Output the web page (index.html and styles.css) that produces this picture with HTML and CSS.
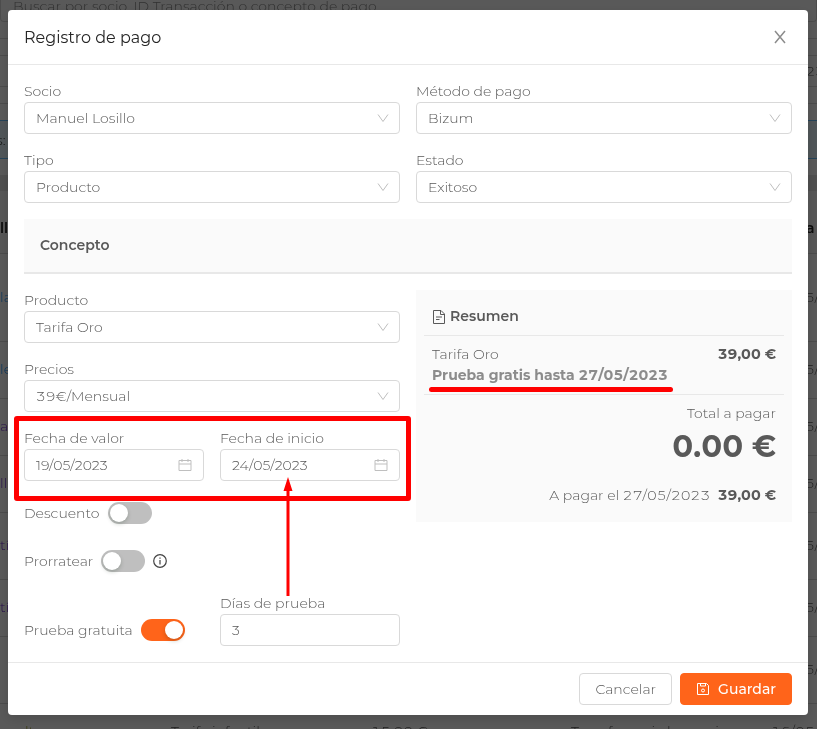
FILE: index.html
```html
<!DOCTYPE html>
<html lang="es">
<head>
  <meta charset="UTF-8">
  <meta name="viewport" content="width=device-width, initial-scale=1.0">
  <title>Registro de pago</title>
  <link rel="stylesheet" href="styles.css">
</head>
<body>
  <!-- Payments list behind the dialog -->
  <div class="page" inert>
    <input class="search" type="text" aria-label="Buscar" placeholder="Buscar por socio, ID Transacción o concepto de pago">
    <div class="strip"></div>
    <div class="strip"></div>
    <div class="strip strip-date"><span>23</span></div>
    <div class="strip"></div>
    <div class="notice">s:</div>
    <div class="band"></div>
    <table class="payments">
      <thead>
        <tr><th>ll</th><th></th><th></th><th></th><th>Fecha</th></tr>
      </thead>
      <tbody>
        <tr class="tall"><td><a href="#">la</a></td><td></td><td></td><td></td><td>16/05/2023</td></tr>
        <tr><td><a href="#">le</a></td><td></td><td></td><td></td><td>16/05/2023</td></tr>
        <tr><td><a href="#" class="visited">ac</a></td><td></td><td></td><td></td><td>16/05/2023</td></tr>
        <tr><td><a href="#" class="visited">lle</a></td><td></td><td></td><td></td><td>16/05/2023</td></tr>
        <tr class="medium"><td><a href="#" class="visited">tí</a></td><td></td><td></td><td></td><td>16/05/2023</td></tr>
        <tr><td><a href="#" class="visited">tí</a></td><td></td><td></td><td></td><td>16/05/2023</td></tr>
        <tr class="medium"><td></td><td></td><td></td><td></td><td>16/05/2023</td></tr>
        <tr><td class="status">vuelta</td><td>Tarifa infantil</td><td>15,00 €</td><td>Transferencia bancaria</td><td>16/05/2023</td></tr>
      </tbody>
    </table>
  </div>

  <div class="overlay">
    <form class="modal" role="dialog" aria-labelledby="modalTitle">
      <header class="modal-header">
        <h1 id="modalTitle">Registro de pago</h1>
        <button type="button" class="close" aria-label="Cerrar">
          <svg width="14" height="14" viewBox="0 0 14 14"><path d="M2 1 12 13M12 1 2 13"/></svg>
        </button>
      </header>

      <div class="modal-body">
        <div class="grid">
          <div class="field">
            <label for="socio">Socio</label>
            <div class="control">
              <select id="socio"><option>Manuel Losillo</option></select>
              <svg class="chevron" viewBox="0 0 12 12"><path d="M1 2.500 6 9.500 11 2.500"/></svg>
            </div>
          </div>
          <div class="field">
            <label for="metodo">Método de pago</label>
            <div class="control">
              <select id="metodo"><option>Bizum</option></select>
              <svg class="chevron" viewBox="0 0 12 12"><path d="M1 2.500 6 9.500 11 2.500"/></svg>
            </div>
          </div>
          <div class="field">
            <label for="tipo">Tipo</label>
            <div class="control">
              <select id="tipo"><option>Producto</option></select>
              <svg class="chevron" viewBox="0 0 12 12"><path d="M1 2.500 6 9.500 11 2.500"/></svg>
            </div>
          </div>
          <div class="field">
            <label for="estado">Estado</label>
            <div class="control">
              <select id="estado"><option>Exitoso</option></select>
              <svg class="chevron" viewBox="0 0 12 12"><path d="M1 2.500 6 9.500 11 2.500"/></svg>
            </div>
          </div>
        </div>

        <h2 class="section-title">Concepto</h2>

        <div class="grid">
          <div class="stack">
            <div class="field">
              <label for="producto">Producto</label>
              <div class="control">
                <select id="producto"><option>Tarifa Oro</option></select>
                <svg class="chevron" viewBox="0 0 12 12"><path d="M1 2.500 6 9.500 11 2.500"/></svg>
              </div>
            </div>
            <div class="field">
              <label for="precios">Precios</label>
              <div class="control">
                <select id="precios"><option>39€/Mensual</option></select>
                <svg class="chevron" viewBox="0 0 12 12"><path d="M1 2.500 6 9.500 11 2.500"/></svg>
              </div>
            </div>

            <div class="grid dates">
              <div class="field">
                <label for="valor">Fecha de valor</label>
                <div class="control">
                  <input id="valor" type="text" value="19/05/2023">
                  <svg class="calendar" viewBox="0 0 14 14"><path d="M1 2.500h12v10H1zM1 6h12M4 1v3M10 1v3"/></svg>
                </div>
              </div>
              <div class="field start-date">
                <label for="inicio">Fecha de inicio</label>
                <div class="control">
                  <input id="inicio" type="text" value="24/05/2023">
                  <svg class="calendar" viewBox="0 0 14 14"><path d="M1 2.500h12v10H1zM1 6h12M4 1v3M10 1v3"/></svg>
                </div>
                <svg class="arrow" width="10" height="119" viewBox="0 0 10 119"><path d="M5 0 9.500 14H6.500V119H3.500V14H.5z"/></svg>
              </div>
              <div class="highlight"></div>
            </div>

            <div class="toggle">
              <label for="descuento">Descuento</label>
              <input id="descuento" class="switch" type="checkbox" role="switch">
            </div>
            <div class="toggle">
              <label for="prorratear">Prorratear</label>
              <input id="prorratear" class="switch" type="checkbox" role="switch">
              <svg class="info" width="14" height="14" viewBox="0 0 14 14"><circle cx="7" cy="7" r="6.300"/><path d="M7 6v4.500M7 3.500v1.200"/></svg>
            </div>
            <div class="grid trial">
              <div class="toggle">
                <label for="prueba">Prueba gratuita</label>
                <input id="prueba" class="switch" type="checkbox" role="switch" checked>
              </div>
              <div class="field">
                <label for="dias">Días de prueba</label>
                <input id="dias" type="text" inputmode="numeric" value="3">
              </div>
            </div>
          </div>

          <section class="summary">
            <h3>
              <svg width="14" height="14" viewBox="0 0 14 14"><path d="M1.500.5h7.500l3.500 3.500v9.500h-11zM8.500.5v4h4M4 7h6M4 9.500h3.500"/></svg>
              Resumen
            </h3>
            <div class="summary-item">
              <div class="line"><span>Tarifa Oro</span><strong>39,00 €</strong></div>
              <div class="trial-note">Prueba gratis hasta 27/05/2023</div>
            </div>
            <div class="summary-total">
              <div>Total a pagar</div>
              <div class="amount">0.00 €</div>
              <div class="due">A pagar el 27/05/2023 <strong>39,00 €</strong></div>
            </div>
          </section>
        </div>
      </div>

      <footer class="modal-footer">
        <button type="button" class="btn">Cancelar</button>
        <button type="submit" class="btn btn-primary">
          <svg width="14" height="14" viewBox="0 0 14 14"><path d="M1.500 1.500h9l2 2v9h-11zM4.500 1.500v2.500h5v-2.500"/><circle cx="7" cy="8.500" r="1.500"/></svg>
          Guardar
        </button>
      </footer>
    </form>
  </div>
</body>
</html>
```
FILE: styles.css
```css
* {
  box-sizing: border-box;
}

body {
  margin: 0;
  overflow: hidden;
  font-family: Montserrat, Inter, "Liberation Sans", sans-serif;
  font-size: 14px;
  font-weight: 300;
  font-variant-numeric: tabular-nums;
  line-height: 21px;
  color: #595959;
  background: #fff;
}

h1, h2, h3 {
  margin: 0;
}

/* Page behind the dialog */
.page {
  position: fixed;
  inset: 0;
  overflow: hidden;
}

.page .search {
  height: 22px;
  padding: 0 12px 10px;
  border-top: 0;
  border-radius: 0 0 4px 4px;
}

.page .search::placeholder {
  color: #8c8c8c;
  opacity: 1;
}

.strip {
  height: 17px;
  border-bottom: 1px solid #d9d9d9;
}

.strip-date {
  height: 31px;
  line-height: 31px;
  text-align: right;
}

.strip-date span {
  margin-right: -8px;
}

.notice {
  height: 39px;
  margin-top: 16px;
  line-height: 39px;
  text-indent: -4px;
  color: #262626;
  background: #e6f7ff;
  border: 1px solid #69c0ff;
  border-width: 1px 0;
}

.band {
  height: 16px;
  margin-top: 16px;
  background: #e4e4e4;
}

.payments {
  width: 100%;
  table-layout: fixed;
  border-collapse: collapse;
  white-space: nowrap;
}

.payments th,
.payments td {
  height: 57px;
  padding: 0;
  text-align: left;
  border-bottom: 1px solid #d9d9d9;
}

.payments th {
  height: 62px;
  padding-top: 14px;
  font-weight: 600;
  color: #262626;
  background: #fafafa;
}

.payments th:nth-child(1) { width: 171px; }
.payments th:nth-child(2) { width: 200px; }
.payments th:nth-child(3) { width: 200px; }
.payments th:nth-child(5) { width: 46px; }

.payments .tall td { height: 88px; }
.payments .medium td { height: 67px; }

.payments a {
  color: #1890ff;
  text-decoration: none;
}

.payments .visited {
  color: #722ed1;
}

.payments .status {
  color: #a0a020;
}

.overlay {
  position: relative;
  min-height: 100vh;
  padding: 10px 9px 10px 8px;
  background: rgba(0, 0, 0, 0.65);
}

/* Dialog */
.modal {
  max-width: 800px;
  margin: 0 auto;
  background: #fff;
  border-radius: 4px;
  box-shadow: 0 4px 12px rgba(0, 0, 0, 0.15);
}

.modal-header {
  display: flex;
  align-items: center;
  justify-content: space-between;
  height: 55px;
  padding: 0 16px;
  border-bottom: 1px solid #e8e8e8;
}

.modal-header h1 {
  font-size: 16px;
  font-weight: 400;
  color: #262626;
}

.close {
  display: flex;
  padding: 5px;
  background: none;
  border: 0;
  cursor: pointer;
}

svg {
  fill: none;
  stroke: currentColor;
}

.close svg {
  stroke: #8c8c8c;
  stroke-width: 1.5;
}

.modal-body {
  display: flex;
  flex-direction: column;
  gap: 16px;
  padding: 16px;
}

.grid {
  display: grid;
  grid-template-columns: 1fr 1fr;
  gap: 16px;
  align-items: start;
}

.stack {
  display: flex;
  flex-direction: column;
  gap: 16px;
}

.field label {
  display: block;
}

.control {
  position: relative;
}

input[type="text"],
select {
  display: block;
  width: 100%;
  height: 32px;
  padding: 0 11px;
  font: inherit;
  color: #595959;
  background: #fff;
  border: 1px solid #d9d9d9;
  border-radius: 4px;
  appearance: none;
}

input[type="text"] {
  font-variant-numeric: normal;
}

.chevron,
.calendar {
  position: absolute;
  top: 10px;
  right: 11px;
  width: 12px;
  height: 12px;
  stroke: #bfbfbf;
  pointer-events: none;
}

.calendar {
  top: 9px;
  right: 12px;
  width: 14px;
  height: 14px;
}

.section-title {
  padding: 16px;
  font-size: 14px;
  font-weight: 600;
  background: #fafafa;
  border-bottom: 2px solid #e8e8e8;
}

/* Switches */
.toggle {
  display: flex;
  align-items: center;
  gap: 8px;
  height: 32px;
}

.switch {
  width: 44px;
  height: 22px;
  margin: 0;
  padding: 2px;
  background: #bfbfbf;
  border-radius: 11px;
  appearance: none;
  cursor: pointer;
}

.switch::before {
  content: "";
  display: block;
  width: 18px;
  height: 18px;
  background: #fff;
  border-radius: 50%;
  box-shadow: 0 2px 4px rgba(0, 35, 11, 0.2);
}

.switch:checked {
  background: #ff641a;
}

.switch:checked::before {
  margin-left: auto;
}

.info {
  color: #434343;
  stroke-width: 1.2;
}

.trial {
  align-items: end;
}

/* Summary */
.summary {
  padding: 8px;
  background: #fafafa;
}

.summary h3 {
  display: flex;
  align-items: center;
  gap: 4px;
  padding: 8px;
  font-size: 14px;
  font-weight: 600;
}

.summary strong {
  font-weight: 700;
}

.summary-item,
.summary-total {
  padding: 8px;
  border-top: 1px solid #e8e8e8;
}

.line {
  display: flex;
  justify-content: space-between;
}

.trial-note {
  position: relative;
  width: fit-content;
  font-weight: 700;
  color: #8c8c8c;
}

.summary-total {
  text-align: right;
}

.amount {
  font-size: 30px;
  font-weight: 700;
  line-height: 45px;
}

.due {
  margin-top: 16px;
}

.due strong {
  margin-left: 4px;
}

/* Red marks */
.dates,
.start-date {
  position: relative;
}

.highlight {
  position: absolute;
  inset: -12px -11px -20px -10px;
  border: 5px solid #f00;
  border-radius: 3px;
  pointer-events: none;
}

.arrow {
  position: absolute;
  top: 49px;
  left: 63px;
  z-index: 1;
  fill: #f00;
  stroke: none;
  pointer-events: none;
}

.trial-note::after {
  content: "";
  position: absolute;
  right: -5px;
  bottom: -6px;
  left: -3px;
  height: 5px;
  background: #f00;
  border-radius: 3px;
}

/* Buttons */
.modal-footer {
  display: flex;
  justify-content: flex-end;
  gap: 8px;
  padding: 10px 16px;
  border-top: 1px solid #e8e8e8;
}

.btn {
  display: flex;
  align-items: center;
  gap: 8px;
  height: 32px;
  padding: 0 15px;
  font: inherit;
  color: #595959;
  background: #fff;
  border: 1px solid #d9d9d9;
  border-radius: 4px;
  cursor: pointer;
}

.btn-primary {
  font-weight: 500;
  color: #fff;
  background: #ff641a;
  border-color: #ff641a;
}
```
